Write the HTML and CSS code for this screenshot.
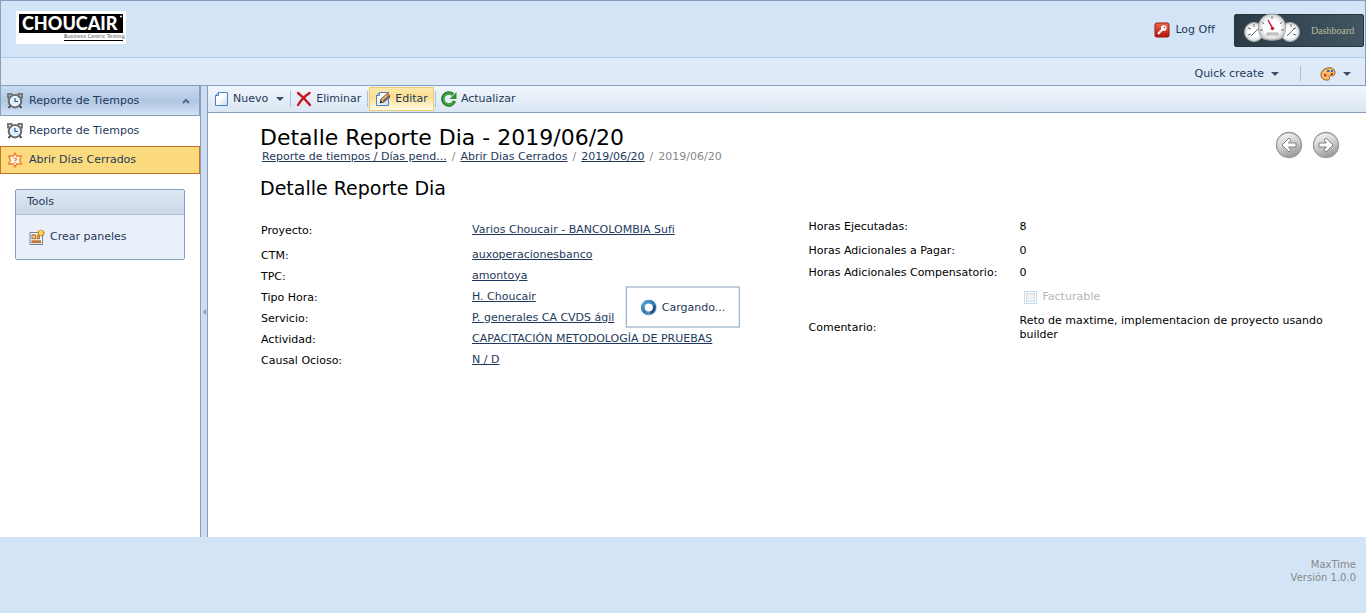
FILE: index.html
```
<!DOCTYPE html>
<html lang="es">
<head>
<meta charset="utf-8">
<title>Detalle Reporte Dia - 2019/06/20</title>
<link rel="stylesheet" href="styles.css">
</head>
<body>
<svg class="defs" aria-hidden="true">
  <defs>
    <linearGradient id="page" x1="0" y1="0" x2="1" y2="1"><stop offset="0.4" stop-color="#fff"/><stop offset="1" stop-color="#c5dcf5"/></linearGradient>
    <linearGradient id="red" x1="0" y1="0" x2="0" y2="1"><stop offset="0" stop-color="#ee6a50"/><stop offset="1" stop-color="#b01208"/></linearGradient>
    <linearGradient id="grey" x1="0.2" y1="0" x2="0.6" y2="1"><stop offset="0" stop-color="#f8f8f8"/><stop offset="0.5" stop-color="#cfcfcf"/><stop offset="1" stop-color="#999"/></linearGradient>
    <radialGradient id="dial"><stop offset="0.6" stop-color="#fff"/><stop offset="1" stop-color="#c9cccf"/></radialGradient>
    <linearGradient id="ring" x1="0" y1="0" x2="1" y2="1"><stop offset="0" stop-color="#5aaedb"/><stop offset="0.5" stop-color="#2b76ac"/><stop offset="1" stop-color="#8ab6d4"/></linearGradient>
    <symbol id="clock" viewBox="0 0 16 16">
      <path d="M1 5.500V1h4.500M10.500 1H15v4.500" fill="none" stroke="#777" stroke-width="2"/>
      <path d="M3.500 12.500l-2 2.500M12.500 12.500l2 2.500" stroke="#444" stroke-width="2"/>
      <circle cx="8" cy="8.200" r="6.200" fill="#dceefb" stroke="#6a6f76" stroke-width="2.200"/>
      <circle cx="8" cy="8.200" r="4.600" fill="none" stroke="#fff"/>
      <path d="M8 5V8.500h3" fill="none" stroke="#345c86" stroke-width="1.200"/>
    </symbol>
  </defs>
</svg>

<header class="header">
  <div class="header-top">
    <svg class="logo" viewBox="0 0 110 33" role="img" aria-label="Choucair Business Centric Testing">
      <path fill="#fff" d="M0 0h110v33H0z"/>
      <path fill="#000" d="M3 3h104v19H3zM48 29h59v1H48z"/>
      <text class="logo-name" x="6" y="19" fill="#fff">CHOUCAIR</text>
      <circle cx="105" cy="5.500" r="1" fill="#fff"/>
      <text class="logo-tag" x="48" y="27" fill="#444">Business Centric Testing</text>
    </svg>
    <div class="account">
      <a class="item" href="#logoff">
        <svg class="icon" viewBox="0 0 16 16"><rect x="1" y="1" width="14" height="14" rx="1.500" fill="url(#red)" stroke="#9c180c"/><circle cx="9.800" cy="6" r="2" fill="#fff" stroke="#fff" stroke-width="1.700"/><circle cx="10.500" cy="5.500" r=".8" fill="#c5321f"/><path d="M8.500 7.300L4 12" stroke="#fff" stroke-width="2"/></svg>
        Log Off</a>
      <a class="dashboard" href="#dashboard">
        <svg class="gauges" viewBox="0 0 58 34">
          <g fill="url(#dial)" stroke="#a9adb0"><circle cx="11" cy="20" r="9.500"/><circle cx="47" cy="20" r="9.500"/></g>
          <path d="M19 26C11 15 17 2 29 2s18 13 10 24c-4 3-16 3-20 0z" fill="url(#dial)" stroke="#9a9fa2"/>
          <path d="M29 4v3M19 10l2 2M39 10l-2 2M17 18h3M41 18h-3M5 16l3 1M5 23l3-1M11 12v3M48 12v3M53 16l-3 1M53 23l-3-1M8 24l7-7M44 24l7-7" stroke="#626b72"/>
          <path d="M25 8l5 9" stroke="#cb163d" stroke-width="1.500"/><circle cx="29.500" cy="16.500" r="1.700" fill="#c51b36"/>
          <path d="M24 21h11v2H24z" fill="#ddd" stroke="#aaa"/>
        </svg>
        <span>Dashboard</span></a>
    </div>
  </div>
  <div class="header-menu">
    <button class="item" type="button">Quick create <i class="caret"></i></button>
    <i class="menu-line"></i>
    <button class="item" type="button" aria-label="Tema">
      <svg class="icon" viewBox="0 0 16 16"><path d="M6 2.500c5-2 9 .5 9 4 0 3-2 4-4 3-2-.5-2 1-1.500 2 1 2-1.500 3-4 2.500C2 13.500 1 11 1 8.500c0-3 2-5 5-6z" fill="#f5bd68" stroke="#945616"/><path d="M7 4h2.500v2H7z" fill="#2f67c8"/><path d="M4 8h2.500v2.500H4z" fill="#d3392c"/><path d="M11 4h2v2h-2z" fill="#316bc9"/><path d="M11 7h2v2h-2z" fill="#ca352b"/></svg>
      <i class="caret"></i></button>
  </div>
</header>

<div class="workspace">
  <aside class="sidebar">
    <nav>
      <button class="nav-row nav-head" type="button"><svg class="icon"><use href="#clock"/></svg><span>Reporte de Tiempos</span><svg class="chevron" viewBox="0 0 8 6"><path d="M1 5l3-3 3 3" fill="none" stroke="#56688a" stroke-width="2"/></svg></button>
      <a class="nav-row" href="#reporte"><svg class="icon"><use href="#clock"/></svg><span>Reporte de Tiempos</span></a>
      <a class="nav-row nav-active" href="#abrir"><svg class="icon" viewBox="0 0 16 16"><path d="M8 1l2 3.300 4.500-.3-2 4 2 4-4.500-.3L8 15l-2-3.300-4.500.3 2-4-2-4 4.500.3z" fill="#fff8ee" stroke="#f0873c" stroke-width="1.500" stroke-linejoin="round"/><path d="M6.500 6.300h2.800v1.500L8 8.500v.800M8 10v1.200" fill="none" stroke="#f0873c" stroke-width="1.200"/></svg><span>Abrir Días Cerrados</span></a>
    </nav>
    <section class="tools">
      <h2>Tools</h2>
      <a class="item" href="#paneles"><svg class="icon" viewBox="0 0 16 16"><path d="M1 3.500h12.500v12H1z" fill="#fff" stroke="#6183ad"/><path d="M3 6h3.500v3.500H3zM8.500 6.500h2v3h-2zM3 12h8.500v1.500H3z" fill="#fce9bc" stroke="#b97935" stroke-width="1.300"/><path d="M12 0l1 2 2-1v2l1 1-1 1v2l-2-1-1 2-1-2-2 1V5L8 4l1-1V1l2 1z" fill="#d98a1c"/><circle cx="12" cy="4" r="2.200" fill="#ffdb4d"/></svg>Crear paneles</a>
    </section>
  </aside>
  <div class="splitter"><i></i></div>

  <main class="main">
    <div class="toolbar">
      <button class="tool" type="button"><svg class="icon" viewBox="0 0 16 16"><path d="M5.500 1.500h9v13h-12v-10z" fill="url(#page)" stroke="#4d82bd"/><path d="M5.500 1.500v3h-3" fill="none" stroke="#4d82bd"/></svg>Nuevo <i class="caret"></i></button>
      <i class="tool-line"></i>
      <button class="tool" type="button"><svg class="icon" viewBox="0 0 16 16"><path d="M2 2c4 3 8 7 12 12M13.500 2C9 5 5 9 2 14" fill="none" stroke="#c51a1d" stroke-width="2.400" stroke-linecap="round"/></svg>Eliminar</button>
      <i class="tool-line"></i>
      <button class="tool tool-hot" type="button"><svg class="icon" viewBox="0 0 16 16"><path d="M4.500 1.500h9v13h-12v-10z" fill="url(#page)" stroke="#4d82bd"/><path d="M4.500 1.500v3h-3" fill="none" stroke="#4d82bd"/><path d="M5 12l1-4 6-5 3 3-6 5z" fill="#f3cc54" stroke="#4b4740"/><path d="M11 3l1.500-1.500 3 3L14 6z" fill="#e26650"/><path d="M5 12l.7-2.500L7.500 11z" fill="#222"/><path d="M8 10l6-5" stroke="#574ca5" stroke-width="1.500"/></svg>Editar</button>
      <i class="tool-line"></i>
      <button class="tool" type="button"><svg class="icon" viewBox="0 0 16 16"><path d="M13.500 10A6 6 0 1 1 12 3.600" fill="none" stroke="#247c28" stroke-width="3.400"/><path d="M13 10.500A5.500 5.500 0 1 1 11 3.300" fill="none" stroke="#51ad4a" stroke-width="1.500"/><path d="M15.500 1v7h-7z" fill="#329235"/></svg>Actualizar</button>
    </div>

    <div class="content">
      <div class="title-row">
        <div>
          <h1>Detalle Reporte Dia - 2019/06/20</h1>
          <nav class="crumbs"><a href="#r">Reporte de tiempos / Días pend...</a><span>/</span><a href="#a">Abrir Dias Cerrados</a><span>/</span><a href="#d">2019/06/20</a><span>/</span><span>2019/06/20</span></nav>
        </div>
        <div class="pager">
          <button type="button" aria-label="Anterior"><svg viewBox="0 0 28 28"><circle cx="14" cy="14" r="12.500" fill="url(#grey)" stroke="#999" stroke-width="1.300"/><path d="M7 14l7-7 2 2-2.500 3H21v4h-7.500l2.500 3-2 2z" fill="#fff" stroke="#808080" stroke-linejoin="round"/></svg></button>
          <button type="button" aria-label="Siguiente"><svg viewBox="0 0 28 28"><circle cx="14" cy="14" r="12.500" fill="url(#grey)" stroke="#999" stroke-width="1.300"/><path d="M21 14l-7-7-2 2 2.500 3H7v4h7.500L12 19l2 2z" fill="#fff" stroke="#808080" stroke-linejoin="round"/></svg></button>
        </div>
      </div>
      <h2 class="subtitle">Detalle Reporte Dia</h2>
      <div class="form">
        <dl class="fields fields-left">
          <dt>Proyecto:</dt><dd><a href="#p">Varios Choucair - BANCOLOMBIA Sufi</a></dd>
          <dt>CTM:</dt><dd><a href="#c">auxoperacionesbanco</a></dd>
          <dt>TPC:</dt><dd><a href="#t">amontoya</a></dd>
          <dt>Tipo Hora:</dt><dd><a href="#h">H. Choucair</a></dd>
          <dt>Servicio:</dt><dd><a href="#s">P. generales CA CVDS ágil</a></dd>
          <dt>Actividad:</dt><dd><a href="#ac">CAPACITACIÓN METODOLOGÍA DE PRUEBAS</a></dd>
          <dt>Causal Ocioso:</dt><dd><a href="#n">N / D</a></dd>
        </dl>
        <dl class="fields fields-right">
          <dt>Horas Ejecutadas:</dt><dd>8</dd>
          <dt>Horas Adicionales a Pagar:</dt><dd>0</dd>
          <dt>Horas Adicionales Compensatorio:</dt><dd>0</dd>
          <dt></dt><dd><label class="check"><input type="checkbox" disabled>Facturable</label></dd>
          <dt>Comentario:</dt><dd class="comment">Reto de maxtime, implementacion de proyecto usando builder</dd>
        </dl>
      </div>
    </div>
  </main>
</div>

<footer class="footer">MaxTime<br>Versión 1.0.0</footer>

<div class="loading" role="status"><svg class="icon" viewBox="0 0 16 16"><circle cx="8" cy="8" r="6" fill="none" stroke="url(#ring)" stroke-width="3.800"/><path d="M13.500 6a6 6 0 0 1-4 7.500" fill="none" stroke="#1f4d85" stroke-width="2.500"/></svg>Cargando...</div>
</body>
</html>
```
FILE: styles.css
```
* { box-sizing: border-box; }

body {
  margin: 0;
  min-height: 100vh;
  display: flex;
  flex-direction: column;
  background: #d3e4f6;
  color: #000;
  font: 11px/14px Verdana, "DejaVu Sans", sans-serif;
}

a { color: #1e395b; }
button { border: 0; padding: 0; background: none; font: inherit; color: #1e395b; }
h1, h2, dl, dd { margin: 0; font-weight: normal; }
.defs { position: absolute; width: 0; height: 0; }
.icon { width: 16px; height: 16px; flex: none; }

.item { display: flex; align-items: center; gap: 5px; color: #1e395b; text-decoration: none; }
.caret { border: 4px solid transparent; border-top-color: #3d4c6b; border-bottom: 0; }

.header { border: 1px solid #859ebf; }
.header-top {
  height: 57px;
  display: flex;
  justify-content: space-between;
  align-items: flex-start;
  padding: 0 1px 0 15px;
  border-bottom: 1px solid #b3cae3;
}
.logo { width: 110px; height: 33px; margin-top: 10px; }
.logo-name { font: 900 18px Lato, sans-serif; }
.logo-tag { font: 5px "DejaVu Sans", sans-serif; }
.account { display: flex; gap: 19px; padding-top: 12px; }
.dashboard {
  display: flex;
  align-items: center;
  width: 130px;
  height: 33px;
  margin-top: 1px;
  padding-left: 8px;
  gap: 10px;
  border: 1px solid #26343c;
  border-radius: 2px;
  background: linear-gradient(90deg, #2b3b46, #415662);
  color: #b9bd9b;
  font: 10px "Liberation Serif", serif;
  text-decoration: none;
}
.gauges { width: 58px; height: 34px; flex: none; margin-bottom: 4px; }
.header-menu {
  height: 27px;
  display: flex;
  justify-content: flex-end;
  align-items: center;
  padding: 4px 14px 0 0;
  background: #deeaf8;
}
.header-menu .item { gap: 7px; }
.menu-line { width: 1px; height: 15px; margin: 0 19px 0 21px; background: #a3c0e8; }

.workspace { flex: 1; display: flex; background: #fff; }
.sidebar { width: 200px; flex: none; }
.nav-row {
  display: flex;
  align-items: center;
  gap: 6px;
  width: 100%;
  height: 30px;
  padding: 0 10px 0 7px;
  color: #1e395b;
  text-align: left;
  text-decoration: none;
}
.nav-head {
  border: 1px solid #859ebf;
  border-top: 0;
  padding: 0 9px 0 6px;
  background: linear-gradient(#c8dbef, #b3cae4 48%, #afc7e2 50%, #d2e2f4);
}
.nav-head span { flex: 1; }
.chevron { width: 8px; height: 6px; }
.nav-active { height: 28px; padding-left: 6px; border: 1px solid #c67428; background: #fcdb7e; }
.tools { margin: 15px; border: 1px solid #859ebf; border-radius: 2px; background: #e9f0fa; }
.tools h2 {
  height: 25px;
  padding: 0 11px;
  border-bottom: 1px solid #b3c3d6;
  background: linear-gradient(#dde8f4, #cbd8e7);
  color: #1e395b;
  font-size: 11px;
  line-height: 24px;
}
.tools .item { padding: 14px 13px; }
.splitter {
  width: 8px;
  flex: none;
  display: flex;
  align-items: center;
  justify-content: center;
  border: solid #859ebf;
  border-width: 0 1px;
  background: #cfddf0;
}
.splitter i { border: 3px solid transparent; border-right-color: #7f9dc4; border-left: 0; }

.main { flex: 1; min-width: 0; }
.toolbar {
  display: flex;
  align-items: center;
  height: 27px;
  padding-left: 1px;
  border-bottom: 1px solid #859ebf;
  background: linear-gradient(#f1f6fd, #dae6f3);
}
.tool { display: flex; align-items: center; gap: 4px; height: 24px; padding: 0 5px 0 4px; }
.tool .caret { margin-left: 4px; }
.tool-line { width: 1px; height: 16px; margin: 0 1px; background: #a3c0e8; }
.tool-hot { padding-left: 5px; border: 1px solid #eecb71; background: linear-gradient(#fdeab0, #fbdf8d 40%, #fffbe6); }

.content { padding: 12px 10px 20px 52px; }
.title-row { display: flex; justify-content: space-between; }
h1 { font-size: 22px; line-height: 25px; }
.crumbs { display: flex; gap: 5px; padding-left: 2px; color: #888; }
.pager { display: flex; gap: 9px; padding: 6px 16px 0 0; }
.pager button, .pager svg { display: block; width: 28px; height: 28px; }
.subtitle { margin-top: 12px; font-size: 19px; line-height: 24px; }

.form { display: grid; grid-template-columns: 1fr 1fr; padding: 17px 0 0 1px; }
.fields { display: grid; grid-template-columns: 211px 1fr; align-items: center; align-content: start; }
.fields-left { grid-template-rows: 28px; grid-auto-rows: 21px; }
.fields-left dd { padding-bottom: 2px; }
.fields-right { grid-template-rows: 20px 28px 16px 32px 30px; }
.check { display: flex; align-items: center; gap: 6px; padding-left: 4px; color: #b2b7bd; }
.check input {
  appearance: none;
  width: 13px;
  height: 13px;
  margin: 0;
  border: 1px solid #c3dbf5;
  background: #f0f2f5;
  box-shadow: inset 0 0 0 1px #fff, inset 0 0 0 2px #d6d9de;
}
.comment { padding-right: 20px; }

.footer { height: 76px; padding: 21px 10px 0; color: #888; font-size: 10px; line-height: 13px; text-align: right; }

/* Progress panel floats over the centre of the window. */
.loading {
  position: fixed;
  top: 50%;
  left: 50%;
  transform: translate(-50%, -50%);
  display: flex;
  align-items: center;
  gap: 5px;
  padding: 12px 14px 11px;
  border: 1px solid #859ebf;
  background: #fff;
  color: #1e395b;
}
```
